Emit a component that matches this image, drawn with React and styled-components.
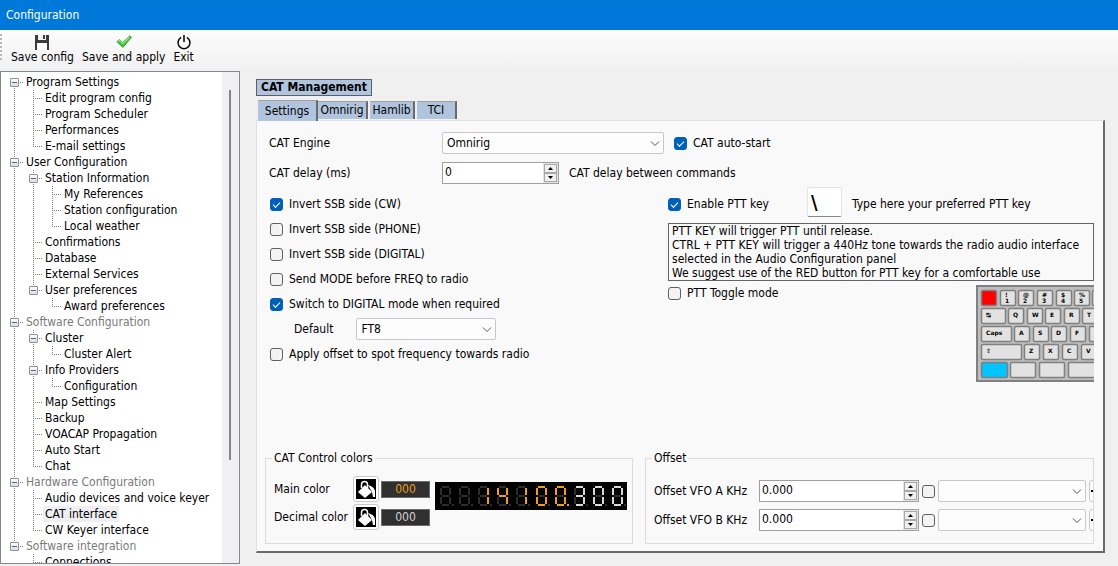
import React from 'react';
import styled, { createGlobalStyle, css } from 'styled-components';

const GlobalStyle = createGlobalStyle`
  * {
    box-sizing: border-box;
  }

  body {
    margin: 0;
    background: #f0f0f0;
    color: #000;
    font-family: 'DejaVu Sans Condensed', 'DejaVu Sans', sans-serif;
    font-stretch: condensed;
    font-size: 12px;
    line-height: 16px;
  }

  button, input, select, textarea {
    margin: 0;
    color: inherit;
    font: inherit;
  }
`;

// guides: l = line, t = branch, e = last branch, b = blank
// B = box with line above and below, F = first box, E = last box
const TREE = [
  ['F', 'Program Settings'],
  ['lt', 'Edit program config'],
  ['lt', 'Program Scheduler'],
  ['lt', 'Performances'],
  ['le', 'E-mail settings'],
  ['B', 'User Configuration'],
  ['lB', 'Station Information'],
  ['llt', 'My References'],
  ['llt', 'Station configuration'],
  ['lle', 'Local weather'],
  ['lt', 'Confirmations'],
  ['lt', 'Database'],
  ['lt', 'External Services'],
  ['lE', 'User preferences'],
  ['lbe', 'Award preferences'],
  ['B', 'Software Configuration', 'dim'],
  ['lB', 'Cluster'],
  ['lle', 'Cluster Alert'],
  ['lB', 'Info Providers'],
  ['lle', 'Configuration'],
  ['lt', 'Map Settings'],
  ['lt', 'Backup'],
  ['lt', 'VOACAP Propagation'],
  ['lt', 'Auto Start'],
  ['le', 'Chat'],
  ['B', 'Hardware Configuration', 'dim'],
  ['lt', 'Audio devices and voice keyer'],
  ['lt', 'CAT interface', 'selected'],
  ['le', 'CW Keyer interface'],
  ['E', 'Software integration', 'dim'],
  ['bt', 'Connections'],
];

const SEGMENTS = {
  a: [2, 1, 9, 1],
  b: [10, 2, 10, 9],
  c: [10, 11, 10, 18],
  d: [2, 19, 9, 19],
  e: [1, 11, 1, 18],
  f: [1, 2, 1, 9],
  g: [2, 10, 9, 10],
};

const LIT = {
  ' ': '',
  0: 'abcdef',
  1: 'bc',
  3: 'abcdg',
  4: 'bcfg',
};

const DIGITS = [' ', ' ', '1', '4', '1', '0', '0.', '3', '0', '0'];

const KEY_ROWS = [
  {
    y: 5,
    keys: [
      [5, 16, '', '#ff0000'],
      [24, 16, '!', null, '1'],
      [42, 16, '@', null, '2'],
      [61, 16, '#', null, '3'],
      [80, 16, '$', null, '4'],
      [98, 16, '%', null, '5'],
      [116, 16, ''],
    ],
  },
  { y: 23, keys: [[5, 25, '↹'], [32, 16, 'Q'], [51, 16, 'W'], [69, 16, 'E'], [88, 16, 'R'], [106, 16, 'T']] },
  { y: 41, keys: [[5, 31, 'Caps'], [38, 16, 'A'], [57, 16, 'S'], [75, 16, 'D'], [94, 16, 'F'], [113, 16, '']] },
  { y: 59, keys: [[5, 41, '⇧'], [48, 16, 'Z'], [67, 16, 'X'], [86, 16, 'C'], [105, 16, 'V']] },
  { y: 77, keys: [[5, 27, '', '#00c4ff'], [34, 26, ''], [63, 26, ''], [92, 40, '']] },
];

const SaveIcon = () => (
  <svg width="16" height="16" viewBox="0 0 16 16" aria-hidden="true">
    <path d="M1 1h14v15H1z" fill="#3c3c3c" />
    <path d="M4 1h8v5H4z" fill="#f4f4f4" />
    <path d="M9 1h2v4H9z" fill="#3c3c3c" />
    <path d="M3 9h10v7H3z" fill="#fff" />
  </svg>
);

const CheckIcon = () => (
  <svg width="16" height="16" viewBox="0 0 16 16" aria-hidden="true">
    <path d="M.8 7.700 3.600 5.500l3 3.200L13.600 2l1.900 1.200L7 13.500z" fill="#3fc03a" stroke="#2a9a2a" strokeWidth=".8" />
    <path d="M2 7.600 3.600 6.400l3 3.200 7-6.400" fill="none" stroke="#8be87a" strokeWidth="1.200" />
  </svg>
);

const PowerIcon = () => (
  <svg width="16" height="16" viewBox="0 0 16 16" fill="none" stroke="#000" strokeWidth="1.5" aria-hidden="true">
    <path d="M5.200 3.400a6 6 0 1 0 5.600 0M8 1v7" />
  </svg>
);

const BucketIcon = () => (
  <svg width="20" height="20" viewBox="0 0 20 20" aria-hidden="true">
    <path d="M0 0h20v20H0z" fill="#000" />
    <path d="M9 6 16 13 9 19 2 13z" fill="#fff" />
    <path d="M5.500 9V5.500c0-4 6-4 6 0V9" fill="none" stroke="#fff" strokeWidth="1.500" />
    <path d="M12 6c4 1 6.500 3 7 6v6h-2l-1-5z" fill="#fff" />
  </svg>
);

const FrequencyDisplay = () => (
  <svg width="192" height="28" viewBox="0 0 192 28" role="img" aria-label="14100.300">
    <path d="M0 0h192v28H0z" fill="#000" />
    {DIGITS.map((digit, i) => {
      const on = i > 6 ? '#d8d8d8' : '#f0a018';
      return (
        <g key={i} transform={`translate(${Math.round(5 + i * 19.1)} 4)`} strokeWidth="2">
          {Object.entries(SEGMENTS).map(([name, [x1, y1, x2, y2]]) => (
            <line
              key={name}
              x1={x1}
              y1={y1}
              x2={x2}
              y2={y2}
              stroke={LIT[digit[0]].includes(name) ? on : '#2c2c2c'}
            />
          ))}
          <rect x="12" y="18" width="2" height="2" fill={digit[1] ? on : '#2c2c2c'} />
        </g>
      );
    })}
  </svg>
);

const Keyboard = () => (
  <svg width="118" height="97" viewBox="0 0 118 97" role="img" aria-label="Keyboard">
    <rect x="1" y="1" width="140" height="95" fill="#bdbdbd" stroke="#808080" strokeWidth="2" />
    {KEY_ROWS.map(({ y, keys }) => keys.map(([x, w, label, color, lower]) => (
      <g key={`${x}-${y}`}>
        <rect x={x + 0.5} y={y + 0.5} width={w - 1} height="15" rx="1.5" fill={color || '#e2e2e2'} stroke="#808080" strokeWidth="1.5" />
        <KeyText x={x + 5} y={lower ? y + 7 : y + 9}>{label}</KeyText>
        {lower && <KeyText x={x + 5} y={y + 13}>{lower}</KeyText>}
      </g>
    )))}
  </svg>
);

const Check = ({ label, checked, name }) => (
  <CheckLabel>
    <CheckBox name={name} defaultChecked={checked} aria-label={label ? undefined : name} />
    {label}
  </CheckLabel>
);

const Spin = ({ id, value, width }) => (
  <SpinBox $width={width}>
    <SpinInput id={id} defaultValue={value} />
    <SpinButtons>
      <SpinButton aria-label="Increase">
        <svg width="5" height="3" viewBox="0 0 5 3"><path d="M0 3 2.500 0 5 3z" /></svg>
      </SpinButton>
      <SpinButton aria-label="Decrease">
        <svg width="5" height="3" viewBox="0 0 5 3"><path d="M0 0 2.500 3 5 0z" /></svg>
      </SpinButton>
    </SpinButtons>
  </SpinBox>
);

const Combo = ({ id, value, width, label }) => (
  <ComboBox $width={width}>
    <ComboSelect id={id} aria-label={label} defaultValue={value}>
      <option value={value}>{value}</option>
    </ComboSelect>
    <ComboArrow width="10" height="6" viewBox="0 0 10 6" fill="none" stroke="#555" aria-hidden="true">
      <path d="M1 .5 5 4.500 9 .5" />
    </ComboArrow>
  </ComboBox>
);

const App = () => (
  <Window>
    <GlobalStyle />
    <TitleBar>Configuration</TitleBar>
    <Toolbar>
      <Grip />
      <ToolButton><SaveIcon />Save config</ToolButton>
      <ToolButton><CheckIcon />Save and apply</ToolButton>
      <ToolButton><PowerIcon />Exit</ToolButton>
    </Toolbar>
    <Body>
      <TreePanel>
        <TreeList>
          {TREE.map(([guides, label, state]) => (
            <TreeRow key={`${guides}-${label}`}>
              {guides.split('').map((guide, i) => (
                <Guide key={i} $type={guide}>{/[FBE]/.test(guide) && <Expander />}</Guide>
              ))}
              <TreeLabel $state={state}>{label}</TreeLabel>
            </TreeRow>
          ))}
        </TreeList>
        <ScrollTrack><ScrollThumb /></ScrollTrack>
      </TreePanel>
      <Content>
        <Heading>CAT Management</Heading>
        <Tabs role="tablist">
          <Tab role="tab" aria-selected="true" $active>Settings</Tab>
          <Tab role="tab" $width={50}>Omnirig</Tab>
          <Tab role="tab" $width={45}>Hamlib</Tab>
          <Tab role="tab" $width={40}>TCI</Tab>
        </Tabs>
        <Panel role="tabpanel">
          <Fields>
            <FieldRow>
              <FieldLabel htmlFor="engine">CAT Engine</FieldLabel>
              <Combo id="engine" value="Omnirig" width={222} />
              <Check label="CAT auto-start" checked />
            </FieldRow>
            <FieldRow>
              <FieldLabel htmlFor="delay">CAT delay (ms)</FieldLabel>
              <Spin id="delay" value="0" width={117} />
              <span>CAT delay between commands</span>
            </FieldRow>
          </Fields>
          <Columns>
            <OptionList>
              <Check label="Invert SSB side (CW)" checked />
              <Check label="Invert SSB side (PHONE)" />
              <Check label="Invert SSB side (DIGITAL)" />
              <Check label="Send MODE before FREQ to radio" />
              <Check label="Switch to DIGITAL mode when required" checked />
              <DefaultRow>
                <label htmlFor="mode">Default</label>
                <Combo id="mode" value="FT8" width={140} />
              </DefaultRow>
              <Check label="Apply offset to spot frequency towards radio" />
            </OptionList>
            <PttColumn>
              <PttRow>
                <Check label="Enable PTT key" checked />
                <PttInput id="ptt" defaultValue="\" />
                <label htmlFor="ptt">Type here your preferred PTT key</label>
              </PttRow>
              <PttHelp>
                PTT KEY will trigger PTT until release.<br />
                CTRL + PTT KEY will trigger a 440Hz tone towards the radio audio interface<br />
                selected in the Audio Configuration panel<br />
                We suggest use of the RED button for PTT key for a comfortable use
              </PttHelp>
              <ToggleRow>
                <Check label="PTT Toggle mode" />
                <Keyboard />
              </ToggleRow>
            </PttColumn>
          </Columns>
          <Groups>
            <Group $width={368}>
              <Legend>CAT Control colors</Legend>
              <ColorsBody>
                <ColorGrid>
                  <span>Main color</span>
                  <ColorButton aria-label="Pick main color"><BucketIcon /></ColorButton>
                  <Swatch $color="#e89c1c">000</Swatch>
                  <span>Decimal color</span>
                  <ColorButton aria-label="Pick decimal color"><BucketIcon /></ColorButton>
                  <Swatch $color="#d0d0d0">000</Swatch>
                </ColorGrid>
                <FrequencyDisplay />
              </ColorsBody>
            </Group>
            <Group>
              <Legend>Offset</Legend>
              <OffsetBody>
                {['A', 'B'].map((vfo) => (
                  <OffsetRow key={vfo}>
                    <OffsetLabel htmlFor={`vfo${vfo}`}>{`Offset VFO ${vfo} KHz`}</OffsetLabel>
                    <Spin id={`vfo${vfo}`} value="0.000" width={160} />
                    <Check name={`Use offset ${vfo}`} />
                    <Combo value="" width={148} label={`Offset ${vfo} preset`} />
                    <MoreButton aria-label="More"><Dot /></MoreButton>
                  </OffsetRow>
                ))}
              </OffsetBody>
            </Group>
          </Groups>
        </Panel>
      </Content>
    </Body>
  </Window>
);

export default App;

const Window = styled.div`
  display: flex;
  flex-direction: column;
  height: 100vh;
  overflow: hidden;
`;

const TitleBar = styled.header`
  flex: none;
  height: 30px;
  padding: 0 6px;
  background: #0078d9;
  color: #fff;
  line-height: 30px;
`;

const Toolbar = styled.div`
  flex: none;
  display: flex;
  height: 41px;
  padding-top: 4px;
  background: linear-gradient(#fdfdfd, #f0f0f0);
`;

const Grip = styled.div`
  width: 2px;
  height: 26px;
  margin-right: 5px;
  background: repeating-linear-gradient(#b8b8b8 0 2px, transparent 2px 4px);
`;

const ToolButton = styled.button`
  display: flex;
  flex-direction: column;
  align-items: center;
  height: 32px;
  padding: 0 4px;
  border: 0;
  background: none;
  line-height: 14px;
  white-space: nowrap;
`;

const Body = styled.div`
  flex: 1;
  display: flex;
  min-height: 0;
`;

const TreePanel = styled.nav`
  flex: none;
  display: flex;
  width: 240px;
  margin-bottom: 2px;
  border: 1px solid #828790;
  background: #fff;
  overflow: hidden;
`;

const TreeList = styled.ul`
  flex: 1;
  margin: 0;
  padding: 2px 0 0 4px;
  list-style: none;
`;

const TreeRow = styled.li`
  display: flex;
  height: 16px;
`;

const dotsDown = 'repeating-linear-gradient(#808080 0 1px, transparent 1px 2px)';
const dotsAcross = 'repeating-linear-gradient(90deg, #808080 0 1px, transparent 1px 2px)';

const guideLayers = {
  b: 'none',
  l: `${dotsDown} 9px 0 / 1px 16px`,
  t: `${dotsDown} 9px 0 / 1px 16px no-repeat, ${dotsAcross} 9px 8px / 9px 1px`,
  e: `${dotsDown} 9px 0 / 1px 8px no-repeat, ${dotsAcross} 9px 8px / 9px 1px`,
  B: `${dotsDown} 9px 0 / 1px 16px no-repeat, ${dotsAcross} 9px 8px / 9px 1px`,
  F: `${dotsDown} 9px 8px / 1px 8px no-repeat, ${dotsAcross} 9px 8px / 9px 1px`,
  E: `${dotsDown} 9px 0 / 1px 8px no-repeat, ${dotsAcross} 9px 8px / 9px 1px`,
};

const Guide = styled.span`
  flex: none;
  width: 19px;
  padding: 4px 5px;
  background: ${({ $type }) => guideLayers[$type]} no-repeat;
`;

const Expander = styled.span`
  display: block;
  width: 9px;
  height: 9px;
  border: 1px solid #919191;
  border-radius: 1px;
  background:
    linear-gradient(#4b63a7, #4b63a7) 1px 3px / 5px 1px no-repeat,
    linear-gradient(#fff, #dcdcdc);
`;

const TreeLabel = styled.span`
  padding: 0 2px;
  white-space: nowrap;
  ${({ $state }) => $state === 'dim' && css`
    color: #7a7a7a;
  `}
  ${({ $state }) => $state === 'selected' && css`
    background: #efeff2;
  `}
`;

const ScrollTrack = styled.div`
  flex: none;
  width: 17px;
  padding: 18px 7px 0;
  background: #f0f0f0;
`;

const ScrollThumb = styled.div`
  width: 2px;
  height: 370px;
  background: #868686;
`;

const Content = styled.main`
  flex: 1;
  display: flex;
  flex-direction: column;
  align-items: flex-start;
  min-width: 0;
  padding: 8px 13px 13px 16px;
`;

const Heading = styled.h1`
  margin: 0 0 4px;
  padding: 0 4px;
  border: 1px solid #5a5f68;
  background: #b0c4de;
  font-size: 12px;
  line-height: 15px;
`;

const Tabs = styled.div`
  display: flex;
  align-items: flex-start;
  gap: 2px;
  height: 20px;
  margin-left: 2px;
`;

const Tab = styled.button`
  width: ${({ $width }) => $width}px;
  height: 18px;
  margin-top: 1px;
  padding: 0;
  border: solid #a0a0a0;
  border-width: 1px 2px 0 0;
  border-right-color: #696969;
  background: #b0c4de;
  line-height: 15px;
  ${({ $active }) => $active && css`
    z-index: 1;
    width: 60px;
    height: 21px;
    margin: 0 -2px 0 0;
    line-height: 19px;
  `}
`;

const Panel = styled.div`
  flex: 1;
  display: flex;
  flex-direction: column;
  align-self: stretch;
  min-height: 0;
  padding: 11px 9px 7px 12px;
  border: solid #696969;
  border-width: 1px 2px 2px 1px;
  border-top-color: #e0e0e0;
  border-left-color: #e0e0e0;
  background: #f9f9f9;
  white-space: nowrap;
`;

const Fields = styled.div`
  display: flex;
  flex-direction: column;
  gap: 8px;
  margin-bottom: 3px;
`;

const FieldRow = styled.div`
  display: flex;
  align-items: center;
  gap: 10px;
  height: 22px;
`;

const FieldLabel = styled.label`
  width: 163px;
`;

const CheckLabel = styled.label`
  flex: none;
  display: flex;
  align-items: center;
  gap: 6px;
`;

const CheckBox = styled.input.attrs({ type: 'checkbox' })`
  appearance: none;
  flex: none;
  width: 13px;
  height: 13px;
  border: 1px solid #606060;
  border-radius: 3px;
  background: #f3f3f3;

  &:checked {
    border-color: #005fb8;
    background: #005fb8;
  }

  &:checked::after {
    content: '';
    display: block;
    width: 6px;
    height: 3px;
    margin: 3px 0 0 2px;
    border: solid #fff;
    border-width: 0 0 1px 1px;
    transform: rotate(-45deg);
  }
`;

const ComboBox = styled.span`
  position: relative;
  display: flex;
  flex: none;
  width: ${({ $width }) => $width}px;
`;

const ComboSelect = styled.select`
  appearance: none;
  width: 100%;
  height: 22px;
  padding: 0 4px;
  border: 1px solid #c8c8cc;
  border-radius: 2px;
  background: #fdfdfd;
`;

const ComboArrow = styled.svg`
  position: absolute;
  top: 9px;
  right: 4px;
  pointer-events: none;
`;

const SpinBox = styled.span`
  display: flex;
  flex: none;
  width: ${({ $width }) => $width}px;
  height: 22px;
  border: 1px solid #a0a0a0;
  background: #fff;
`;

const SpinInput = styled.input`
  flex: 1;
  min-width: 0;
  padding: 0 2px 2px;
  border: 0;
  background: none;
`;

const SpinButtons = styled.span`
  display: flex;
  flex-direction: column;
  width: 15px;
  padding: 1px;
  background: #e4e4e4;
`;

const SpinButton = styled.button`
  flex: 1;
  display: flex;
  align-items: center;
  justify-content: center;
  padding: 0;
  border: 1px solid #a8a8a8;
  background: #f0f0f0;
`;

const Columns = styled.div`
  display: flex;
  justify-content: space-between;
`;

const OptionList = styled.div`
  display: flex;
  flex-direction: column;
  gap: 9px;
  padding: 9px 0 0 1px;
`;

const DefaultRow = styled.div`
  display: flex;
  align-items: center;
  gap: 23px;
  height: 16px;
  padding-left: 24px;
`;

const PttColumn = styled.div`
  width: 426px;
`;

const PttRow = styled.div`
  display: flex;
  align-items: center;
  height: 34px;
  margin-bottom: 2px;
`;

const PttInput = styled.input`
  align-self: flex-start;
  width: 35px;
  height: 30px;
  margin: 0 10px 0 38px;
  padding: 0 3px;
  border: 1px solid #e4e4e4;
  border-bottom-color: #868686;
  border-radius: 2px;
  background: #fff;
  font-size: 20px;
  font-weight: 700;
`;

const PttHelp = styled.p`
  margin: 0 0 4px;
  padding: 0 3px;
  border: 1px solid #646464;
  line-height: 14px;
`;

const ToggleRow = styled.div`
  display: flex;
  align-items: flex-start;
  justify-content: space-between;
`;

const KeyText = styled.text`
  font: 700 6px 'DejaVu Sans', sans-serif;
`;

const Groups = styled.div`
  display: flex;
  gap: 12px;
  margin: auto 0 0 -4px;
`;

const Group = styled.fieldset`
  flex: ${({ $width }) => ($width ? 'none' : 1)};
  width: ${({ $width }) => $width}px;
  min-width: 0;
  height: 94px;
  margin: 0;
  padding: 0 0 0 8px;
  border: 1px solid #dcdcdc;
  overflow: hidden;
`;

const Legend = styled.legend`
  margin-left: -2px;
  padding: 0 2px;
`;

const ColorsBody = styled.div`
  display: flex;
  justify-content: space-between;
  padding: 10px 5px 0 0;

  > svg {
    margin-top: 6px;
  }
`;

const ColorGrid = styled.div`
  display: grid;
  grid-template-columns: 77px 26px 49px;
  column-gap: 2px;
  row-gap: 2px;
  align-items: center;
`;

const ColorButton = styled.button`
  width: 26px;
  height: 26px;
  padding: 2px;
  border: 1px solid #c8c8c8;
  border-radius: 3px;
  background: #fff;

  svg {
    display: block;
  }
`;

const Swatch = styled.span`
  height: 17px;
  border: 1px solid #6a6a6a;
  background: #303030;
  color: ${({ $color }) => $color};
  line-height: 15px;
  text-align: center;
`;

const OffsetBody = styled.div`
  display: flex;
  flex-direction: column;
  gap: 7px;
  padding-top: 14px;
`;

const OffsetRow = styled.div`
  display: flex;
  align-items: center;
  gap: 3px;
`;

const OffsetLabel = styled.label`
  flex: none;
  width: 102px;
`;

const MoreButton = styled.button`
  flex: none;
  width: 22px;
  height: 22px;
  padding: 0 1px;
  border: 1px solid #c8c8c8;
  border-radius: 3px;
  background: #fdfdfd;
`;

const Dot = styled.span`
  display: block;
  width: 2px;
  height: 2px;
  background: #000;
`;
